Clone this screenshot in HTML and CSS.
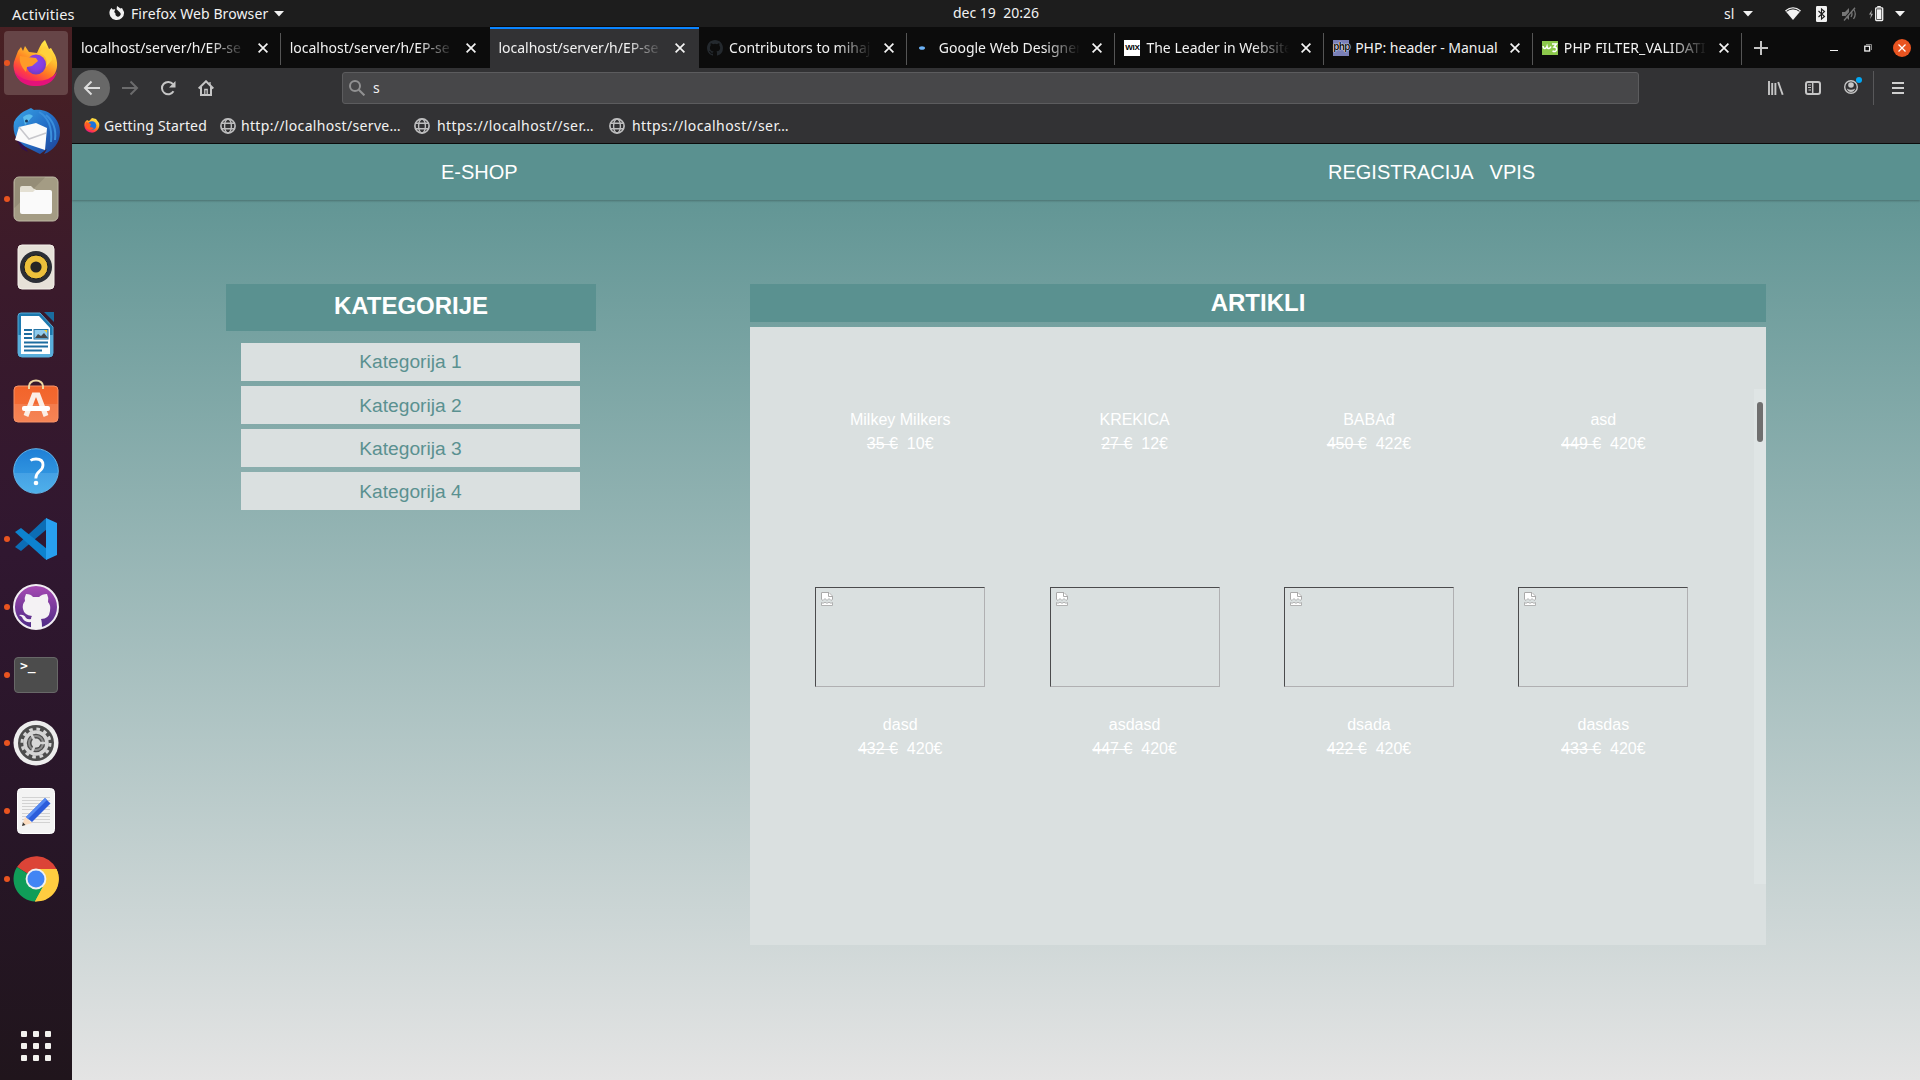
FILE: index.html
```html
<!DOCTYPE html>
<html lang="sl">
<head>
<meta charset="utf-8">
<title>E-SHOP</title>
<link rel="stylesheet" href="styles.css">
</head>
<body>
<svg class="defs" width="0" height="0">
  <defs>
    <linearGradient id="fox" x1=".85" y1="0" x2=".3" y2="1"><stop offset="0" stop-color="#fff44f"/><stop offset=".35" stop-color="#ffbd2f"/><stop offset=".6" stop-color="#ff7a22"/><stop offset=".8" stop-color="#ff3b47"/><stop offset="1" stop-color="#e31587"/></linearGradient>
    <radialGradient id="orb" cx=".5" cy=".4" r=".6"><stop offset="0" stop-color="#7a4ef0"/><stop offset=".6" stop-color="#8a3be0"/><stop offset="1" stop-color="#6a3ec0"/></radialGradient>
    <linearGradient id="bird" x1="0" y1="0" x2="1" y2="1"><stop offset="0" stop-color="#39a5e6"/><stop offset=".5" stop-color="#2470c8"/><stop offset="1" stop-color="#1d3f94"/></linearGradient>
    <linearGradient id="octo" x1="0" y1="0" x2="0" y2="1"><stop offset="0" stop-color="#a84bb4"/><stop offset="1" stop-color="#4b2a84"/></linearGradient>
    <linearGradient id="bag" x1="0" y1="0" x2="0" y2="1"><stop offset="0" stop-color="#f2642a"/><stop offset=".5" stop-color="#f36a33"/><stop offset=".51" stop-color="#f47c4c"/><stop offset="1" stop-color="#f58455"/></linearGradient>
    <linearGradient id="help" x1="0" y1="0" x2="0" y2="1"><stop offset="0" stop-color="#1f7fd6"/><stop offset=".54" stop-color="#2f93df"/><stop offset=".55" stop-color="#45a1e5"/><stop offset="1" stop-color="#4fb0ea"/></linearGradient>
    <symbol id="globe" viewBox="0 0 16 16"><g fill="none" stroke="#bdbdbe" stroke-width="1.4"><circle cx="8" cy="8" r="7.1" stroke-width="1.7"/><ellipse cx="8" cy="8" rx="3.4" ry="7"/><path d="M1 5.3h14M1 10.7h14"/></g></symbol>
    <symbol id="close" viewBox="0 0 10 10"><path d="M.6.6l8.8 8.8M9.4.6L.6 9.4" stroke="#f4f4f4" stroke-width="1.7"/></symbol>
    <symbol id="caret" viewBox="0 0 10 6"><path d="M0 0h10L5 5.4z" fill="#f2f2f2"/></symbol>
    <symbol id="cat" viewBox="0 0 16 16"><path d="M8 0C3.58 0 0 3.58 0 8c0 3.54 2.29 6.53 5.47 7.59.4.07.55-.17.55-.38 0-.19-.01-.82-.01-1.49-2.01.37-2.53-.49-2.69-.94-.09-.23-.48-.94-.82-1.13-.28-.15-.68-.52-.01-.53.63-.01 1.08.58 1.23.82.72 1.21 1.87.87 2.33.66.07-.52.28-.87.51-1.07-1.78-.2-3.64-.89-3.64-3.95 0-.87.31-1.59.82-2.15-.08-.2-.36-1.02.08-2.12 0 0 .67-.21 2.2.82a7.6 7.6 0 014 0c1.53-1.04 2.2-.82 2.2-.82.44 1.1.16 1.92.08 2.12.51.56.82 1.27.82 2.15 0 3.07-1.87 3.75-3.65 3.95.29.25.54.73.54 1.48 0 1.07-.01 1.93-.01 2.2 0 .21.15.46.55.38A8.01 8.01 0 0016 8c0-4.42-3.58-8-8-8z"/></symbol>
    <symbol id="broken" viewBox="0 0 12 14"><path d="M0 7V0h8l4 4v3l-2 1-2-1.500L6 8 4 6.500 2 8z" fill="#fff"/><path d="M.5 7V.5H8L11.500 4v3M7.500.5v4h4" fill="none" stroke="#aaa"/><path d="M0 7l2 1.500 2-2 2 2 2-2 2 2 2-1.500" fill="none" stroke="#aaa" stroke-width=".8"/><path d="M.5 10.500v3h11v-3l-1.500.8-2-1-2 1-2-1-2 1z" fill="#fff" stroke="#aaa" stroke-width=".9"/></symbol>
  </defs>
</svg>

<header class="topbar">
  <span class="activities">Activities</span>
  <svg class="app-glyph" width="16" height="16" viewBox="0 0 16 16"><path d="M1 4l1.500-2 1.200 1.500 2.600-.2L5.200 6l1.300 1.500A2.600 2.600 0 1 0 10.500 6L7.600 3.200 8 0l3.500 2.500L13 2l2 4a7.300 7.300 0 1 1-14-2z" fill="#f2f2f2"/></svg>
  <span class="app-name">Firefox Web Browser</span>
  <svg class="app-caret" width="10" height="6"><use href="#caret"/></svg>
  <span class="clock">dec 19&nbsp; 20:26</span>
  <div class="tray">
    <span class="lang">sl</span>
    <svg class="lang-caret" width="10" height="6"><use href="#caret"/></svg>
    <svg class="wifi" width="16" height="13" viewBox="0 0 16 13"><path d="M0 3.500Q8-3 16 3.500L8 13z" fill="#f2f2f2"/><path d="M1.500 4.300Q8-.5 14.500 4.300" fill="none" stroke="#1d1d1d" stroke-width="1"/></svg>
    <svg class="bt" width="11" height="16" viewBox="0 0 11 16"><rect width="11" height="16" rx="1.200" fill="#f2f2f2"/><path d="M2.500 5l6 5.500L5.500 13V3l3 2.500-6 5.500" fill="none" stroke="#1d1d1d" stroke-width="1.100"/></svg>
    <svg class="mute" width="15" height="14" viewBox="0 0 15 14"><path d="M0 5h3l4-4v12L3 9H0z" fill="#777"/><path d="M9 4q2 3 0 6M11.500 2q3.500 5 0 10" fill="none" stroke="#777" stroke-width="1.300"/><path d="M12 .5L1 13" stroke="#1d1d1d" stroke-width="1.200"/><path d="M13 .8L2 13.500" stroke="#777" stroke-width="1.300"/></svg>
    <svg class="battery" width="15" height="16" viewBox="0 0 15 16"><path d="M3 4L0 8.500h2L1.200 13 4 7.800H2.200z" fill="#aaa"/><path d="M8.500 1.200V.5h3v.7" stroke="#f2f2f2" fill="none"/><rect x="6.700" y="1.900" width="7" height="12.600" rx=".7" fill="none" stroke="#f2f2f2" stroke-width="1.300"/><rect x="8" y="3.300" width="4.400" height="9.800" fill="#f2f2f2"/></svg>
    <svg class="end-caret" width="10" height="6"><use href="#caret"/></svg>
  </div>
</header>

<div class="desktop">
  <nav class="dock">
    <div class="app running focused"><svg width="48" height="48" viewBox="0 0 48 48"><path d="M3 20L6 12l3-4 2 4 2-5 4 6 8 1c3-6 4-10 8-13l4 9 2-1 4 7c3 7 3 14-1 20A22 22 0 0 1 3 34c-2-5-2-10 0-14z" fill="url(#fox)"/><path d="M2.500 33q7 9 21.500 9t21-9Q41 47 24 47T2.500 33z" fill="#e4127a"/><circle cx="24" cy="25.500" r="10" fill="url(#orb)"/><path d="M8 17l7 1 9 1 2 3-6 5-5 1-1 5C9 28 7 22 8 17z" fill="#ff9a28"/><path d="M27 14q10 3 7 14l6-7q0-9-7-14z" fill="#ffd13c"/></svg></div>
    <div class="app"><svg width="50" height="50" viewBox="0 0 50 50"><path d="M3 16C8 6 16 4 20 2l3 2C38 2 49 13 49 26c0 11-7 19-16 22l3-5-7 5-14-7C6 37 1 27 3 16z" fill="url(#bird)"/><path d="M3 30l8 13 6 3-3-5z" fill="#321050"/><path d="M8 21l17-4 11 5-2 22L4 34z" fill="#fafafa"/><path d="M8 21l10 12 17-6" fill="none" stroke="#c7c7cc" stroke-width="1.500"/><path d="M12 11q6-5 10-1l-8 9z" fill="#5bbcec"/><circle cx="15.500" cy="15" r="1.500" fill="#17385f"/><path d="M28 6q14 8 12 30M35 9q11 9 9 25" stroke="#3b8fdc" stroke-width="2" fill="none"/></svg></div>
    <div class="app running"><svg width="46" height="46" viewBox="0 0 46 46"><rect x="1" y="1" width="44" height="44" rx="5" fill="#a49c84" stroke="#beb9a5"/><path d="M1.500 32L32 1.500H6q-4 0-4 4z" fill="#958d77"/><path d="M7 12q0-2 2-2h9l4 4h9v8H7z" fill="#e4e0d3"/><rect x="7" y="14" width="32" height="24" rx="2" fill="#fafafa"/><path d="M7 16h13l3-3H8z" fill="#e4e0d3"/></svg></div>
    <div class="app"><svg width="38" height="46" viewBox="0 0 38 46"><rect x="1" y="1" width="36" height="44" rx="4" fill="#e6e1d8" stroke="#f4f0ea"/><circle cx="19" cy="23" r="16" fill="#2b2e35"/><circle cx="19" cy="23" r="12" fill="#ecc03b" stroke="#171a20" stroke-width="1"/><circle cx="19" cy="23" r="5.600" fill="#252525"/></svg></div>
    <div class="app"><svg width="38" height="46" viewBox="0 0 38 46"><path d="M4 1h19l13 14v26q0 4-4 4H5q-4 0-4-4V4q0-3 3-3z" fill="#1d79ae" stroke="#56a9d4"/><path d="M1 23h35v18q0 4-4 4H5q-4 0-4-4z" fill="#59aedb"/><path d="M4 4h18l11 12v26H4z" fill="#fff"/><path d="M27 0h10v10z" fill="#1a6c9f"/><path d="M7 18h8M7 22h8M7 26h8M7 30.500h24M7 34.500h24M7 38.500h18" stroke="#1d6c9f" stroke-width="2"/><rect x="17" y="17.500" width="14" height="9.500" fill="#8fcbed" stroke="#2475a6"/><path d="M18 26l3-4 3 2 3-3 4 5z" fill="#45484a"/><path d="M27 18h3v3z" fill="#f5cc31"/></svg></div>
    <div class="app software"><svg width="46" height="44" viewBox="0 0 46 44"><rect x="1" y="7" width="44" height="36" rx="4" fill="url(#bag)" stroke="#f69268"/><path d="M16 10V7a7 5.500 0 0 1 14 0v3" fill="none" stroke="#efd8a2" stroke-width="2"/><path d="M13 37l8-21h4l8 21" fill="none" stroke="#fbeee6" stroke-width="5"/><rect x="9" y="27" width="28" height="5" rx="2" fill="#fff"/></svg></div>
    <div class="app"><svg width="46" height="46" viewBox="0 0 46 46"><circle cx="23" cy="23" r="22.300" fill="url(#help)" stroke="#61b5ea"/><path d="M17.500 12.500q2-1.500 5.500-1.500 7 0 7 6 0 3.500-3.700 6.300-3.500 2.700-3.500 7.200" fill="none" stroke="#fff" stroke-width="2.800"/><circle cx="23" cy="35" r="2.300" fill="#fff"/></svg></div>
    <div class="app running"><svg width="44" height="44" viewBox="0 0 44 44"><path d="M1 30l6 4L33 12V1L31 2z" fill="#0c6db5"/><path d="M1 15l6-4 26 21v11l-2-1z" fill="#0d83cf"/><path d="M32 1l11 5v32l-11 5z" fill="#28a0ef"/></svg></div>
    <div class="app running"><svg width="48" height="48" viewBox="0 0 48 48"><circle cx="24" cy="24" r="22" fill="url(#octo)" stroke="#f1edf3" stroke-width="2"/><path d="M14 11q5 0 7 3h6q3-3 8-3 2 4 1 8 3 3 2 9-1 8-9 8 1 2 1 10H19v-7q-7 1-9-5l-3-2q5-1 7 3 2 2 5 1 0-2 1-3-8-1-9-7-1-5 2-8-1-3 1-7z" fill="#f4f2f4"/></svg></div>
    <div class="app running"><div class="terminal-icon">&gt;_</div></div>
    <div class="app running"><svg width="46" height="46" viewBox="0 0 46 46"><circle cx="23" cy="23" r="22.500" fill="#ededed"/><circle cx="23" cy="23" r="18" fill="#4c4c4c"/><circle cx="23" cy="23" r="14" fill="none" stroke="#d4d4d4" stroke-width="3" stroke-dasharray="3.600 3.730"/><circle cx="23" cy="23" r="11" fill="#4c4c4c" stroke="#d4d4d4" stroke-width="3.500"/><circle cx="23" cy="23" r="7" fill="none" stroke="#8b8b8b" stroke-width="2"/><path d="M23 23l-5 11M23 23l-6-11M23 23h12" stroke="#d4d4d4" stroke-width="2.500"/><circle cx="23" cy="23" r="4.500" fill="#d8d8d8"/></svg></div>
    <div class="app running"><svg width="38" height="46" viewBox="0 0 38 46"><rect x=".5" y=".5" width="37" height="45" rx="4" fill="#f3f3f3" stroke="#fff"/><path d="M5 9.500h28M5 12.500h28M5 15.500h28M5 18.500h28M5 21.500h28M5 25.500h28M5 28.500h28M5 31.500h28M5 34.500h28" stroke="#d2d2d2"/><path d="M5 38l3-9 7 6z" fill="#fbdcc0"/><path d="M5 38l1-3.500 2.500 2.500z" fill="#333"/><path d="M9 29l19-19 5.500 5.500L15 34z" fill="#2c5ddb"/><path d="M9 29l19-19 2 2-19 19z" fill="#5489f2"/></svg></div>
    <div class="app running"><svg width="46" height="46" viewBox="0 0 46 46"><path d="M23 23L4 11A22.500 22.500 0 0 1 43.500 13z" fill="#dc4437"/><path d="M23 23l20.500-10A22.500 22.500 0 0 1 22 45.500z" fill="#ffcd40"/><path d="M23 23l9 4-10 18.500A22.500 22.500 0 0 1 4 11z" fill="#109d58"/><path d="M23 13h20.500q2 4 2 10-1 20-23.500 22.500L32 27z" fill="#ffcd40"/><circle cx="23" cy="23" r="10.400" fill="#f1f1f1"/><circle cx="23" cy="23" r="8.500" fill="#4285f4"/></svg></div>
    <div class="launcher"><i></i><i></i><i></i><i></i><i></i><i></i><i></i><i></i><i></i></div>
  </nav>

  <main class="browser">
    <div class="tabs">
      <div class="tab"><span class="label">localhost/server/h/EP-se</span><svg width="10" height="10"><use href="#close"/></svg></div>
      <div class="tab no-line"><span class="label">localhost/server/h/EP-se</span><svg width="10" height="10"><use href="#close"/></svg></div>
      <div class="tab active"><span class="label">localhost/server/h/EP-se</span><svg width="10" height="10"><use href="#close"/></svg></div>
      <div class="tab"><svg class="fav" width="16" height="16" fill="#24292e"><use href="#cat"/></svg><span class="label">Contributors to mihaj</span><svg width="10" height="10"><use href="#close"/></svg></div>
      <div class="tab loading"><svg class="fav" width="16" height="16" viewBox="0 0 16 16"><ellipse cx="6" cy="8" rx="3" ry="1.800" fill="#6cb2f7"/></svg><span class="label">Google Web Designer</span><svg width="10" height="10"><use href="#close"/></svg></div>
      <div class="tab"><span class="fav wix">WIX</span><span class="label">The Leader in Website</span><svg width="10" height="10"><use href="#close"/></svg></div>
      <div class="tab"><span class="fav php">php</span><span class="label full">PHP: header - Manual</span><svg width="10" height="10"><use href="#close"/></svg></div>
      <div class="tab"><svg class="fav" width="16" height="16" viewBox="0 0 16 16"><rect y="1" width="16" height="14" fill="#8cc84b"/><path d="M1 6q.5 3 2 2.500T5 6.500q.5 2.500 2 2T9 6.500M10 4h4.500L12 7q3 0 2.500 3-1 2.500-4 1" fill="none" stroke="#fff" stroke-width="1.500"/></svg><span class="label filter">PHP FILTER_VALIDATI</span><svg width="10" height="10"><use href="#close"/></svg></div>
      <svg class="new-tab" width="14" height="14" viewBox="0 0 14 14"><path d="M7 0v14M0 7h14" stroke="#c4c4c4" stroke-width="2"/></svg>
      <svg class="minimize" width="8" height="8" viewBox="0 0 8 8"><path d="M0 6.500h8" stroke="#f2f2f2"/></svg>
      <svg class="restore" width="8" height="8" viewBox="0 0 8 8"><rect x=".8" y="2.200" width="4.800" height="4.800" fill="none" stroke="#f2f2f2" stroke-width="1.300"/><path d="M2 .5h5.500V6" fill="none" stroke="#888"/></svg>
      <svg class="quit" width="18" height="18" viewBox="0 0 18 18"><circle cx="9" cy="9" r="9" fill="#e95420"/><path d="M5.500 5.500l7 7M12.500 5.500l-7 7" stroke="#fff" stroke-width="1.300"/></svg>
    </div>

    <div class="toolbar">
      <div class="back"><svg width="18" height="16" viewBox="0 0 18 16"><path d="M17 8H2M8.500 1.500L2 8l6.500 6.500" fill="none" stroke="#ddd" stroke-width="2"/></svg></div>
      <svg class="forward" width="18" height="16" viewBox="0 0 18 16"><path d="M1 8h15M9.500 1.500L16 8l-6.500 6.500" fill="none" stroke="#6b6b6c" stroke-width="2"/></svg>
      <svg class="reload" width="16" height="16" viewBox="0 0 16 16"><path d="M13.500 11.300A6.200 6.200 0 1 1 13 4.200" fill="none" stroke="#c6c6c6" stroke-width="2"/><path d="M15.500 1v6.500H9z" fill="#c6c6c6"/></svg>
      <svg class="home" width="16" height="16" viewBox="0 0 16 16"><path d="M.7 8.500L8 1.300l7.300 7.200M3 7v8h10V7" fill="none" stroke="#c6c6c6" stroke-width="2"/><path d="M6.800 15V9.500h2.400V15M12 2v3" stroke="#c6c6c6" stroke-width="1.300" fill="none"/></svg>
      <div class="urlbar"><svg width="16" height="16" viewBox="0 0 16 16"><circle cx="6" cy="6" r="5" fill="none" stroke="#919192" stroke-width="2"/><path d="M9.800 9.800l5.600 5.600" stroke="#919192" stroke-width="2"/></svg><span>s</span></div>
      <svg class="library" width="16" height="14" viewBox="0 0 16 14"><path d="M1 0v14M4.200 2v12M7.400 2v12M10.200 1l4.500 12.700" stroke="#c6c6c6" stroke-width="1.900"/></svg>
      <svg class="reader" width="16" height="14" viewBox="0 0 16 14"><rect x="1" y="1" width="14" height="12" rx="2" fill="none" stroke="#c6c6c6" stroke-width="2"/><path d="M7.700 1v12" stroke="#c6c6c6" stroke-width="1.500"/><path d="M3 4h3M3 6.500h3M3.500 9H6" stroke="#c6c6c6"/></svg>
      <svg class="account" width="19" height="18" viewBox="0 0 19 18"><circle cx="7" cy="11" r="6.300" fill="none" stroke="#c6c6c6" stroke-width="1.400"/><circle cx="7" cy="9" r="2.800" fill="#c6c6c6"/><path d="M2.800 12.500Q7 15 11.200 12.500 10 16 7 16t-4.200-3.500z" fill="#c6c6c6"/><circle cx="15" cy="4" r="3" fill="#00a8f5"/></svg>
      <span class="divider"></span>
      <svg class="menu" width="12" height="12" viewBox="0 0 12 12"><path d="M0 1h12M0 6h12M0 11h12" stroke="#cfcfcf" stroke-width="1.800"/></svg>
    </div>

    <div class="bookmarks">
      <div class="bookmark first"><svg width="16" height="16" viewBox="0 0 16 16"><path d="M1 4l2-2 2 1 3-3 4 1 3 4a7.500 7.500 0 1 1-14-1z" fill="url(#fox)"/><circle cx="8" cy="7.500" r="4.300" fill="#1b72dc"/><path d="M2 4l5 2-1 3 4 1q-4 4-8 0z" fill="#ff5a24"/></svg><span>Getting Started</span></div>
      <div class="bookmark second"><svg width="16" height="16"><use href="#globe"/></svg><span>http://localhost/serve…</span></div>
      <div class="bookmark third"><svg width="16" height="16"><use href="#globe"/></svg><span>https://localhost//ser…</span></div>
      <div class="bookmark third"><svg width="16" height="16"><use href="#globe"/></svg><span>https://localhost//ser…</span></div>
    </div>

    <div class="page">
      <header class="shop-header">
        <span class="brand">E-SHOP</span>
        <nav class="links"><span>REGISTRACIJA</span><span>VPIS</span></nav>
      </header>
      <div class="shop">
        <aside class="categories">
          <h2>KATEGORIJE</h2>
          <ul><li>Kategorija 1</li><li>Kategorija 2</li><li>Kategorija 3</li><li>Kategorija 4</li></ul>
        </aside>
        <section class="articles">
          <h2>ARTIKLI</h2>
          <div class="panel">
            <div class="scroller">
              <div class="grid">
                <article><div class="details"><p>Milkey Milkers</p><p><s>35 €</s>&nbsp; 10€</p></div></article>
                <article><div class="details"><p>KREKICA</p><p><s>27 €</s>&nbsp; 12€</p></div></article>
                <article><div class="details"><p>BABAđ</p><p><s>450 €</s>&nbsp; 422€</p></div></article>
                <article><div class="details"><p>asd</p><p><s>449 €</s>&nbsp; 420€</p></div></article>
                <article><div class="picture"><svg width="12" height="14"><use href="#broken"/></svg></div><div class="details"><p>dasd</p><p><s>432 €</s>&nbsp; 420€</p></div></article>
                <article><div class="picture"><svg width="12" height="14"><use href="#broken"/></svg></div><div class="details"><p>asdasd</p><p><s>447 €</s>&nbsp; 420€</p></div></article>
                <article><div class="picture"><svg width="12" height="14"><use href="#broken"/></svg></div><div class="details"><p>dsada</p><p><s>422 €</s>&nbsp; 420€</p></div></article>
                <article><div class="picture"><svg width="12" height="14"><use href="#broken"/></svg></div><div class="details"><p>dasdas</p><p><s>433 €</s>&nbsp; 420€</p></div></article>
              </div>
              <div class="track"><div class="thumb"></div></div>
            </div>
          </div>
        </section>
      </div>
    </div>
  </main>
</div>
</body>
</html>
```
FILE: styles.css
```css
* { box-sizing: border-box; }
body {
  margin: 0;
  width: 1920px;
  height: 1080px;
  overflow: hidden;
  font: 14px/20px "Noto Sans", sans-serif;
  color: #f2f2f2;
}
svg { display: block; flex: none; }
.defs { position: absolute; }
h2, p, ul { margin: 0; padding: 0; }

/* GNOME top bar */
.topbar {
  display: flex;
  align-items: center;
  height: 27px;
  padding-left: 12px;
  background: #1d1d1d;
  white-space: nowrap;
}
.activities { width: 97px; font-size: 14.6px; letter-spacing: .2px; }
.app-glyph { margin-right: 6px; }
.app-name { width: 143px; letter-spacing: .1px; }
.clock { margin-left: 669px; width: 771px; padding-bottom: 1px; letter-spacing: 0; }
.tray { display: flex; align-items: center; }
.lang { width: 19px; }
.wifi { margin-left: 32px; }
.bt { margin-left: 15px; }
.mute { margin-left: 15px; }
.battery { margin-left: 12px; }
.end-caret { margin-left: 11px; }

.desktop { display: flex; height: 1053px; }

/* Dock */
.dock {
  display: flex;
  flex-direction: column;
  align-items: center;
  gap: 4px;
  width: 72px;
  padding-top: 4px;
  background: linear-gradient(#492023, #3a1a2b 25%, #301730 50%, #281628 75%, #20151c);
}
.app {
  position: relative;
  display: flex;
  align-items: center;
  justify-content: center;
  width: 64px;
  height: 64px;
  flex: none;
  border-radius: 4px;
}
.focused { background: #664547; }
.running::before {
  content: "";
  position: absolute;
  left: 0;
  top: 29px;
  width: 6px;
  height: 6px;
  border-radius: 50%;
  background: #e95420;
}
.software { padding-bottom: 5px; }
.terminal-icon {
  width: 44px;
  height: 36px;
  padding: 0 5px;
  border: 1px solid #686868;
  border-radius: 4px;
  background: #4c4c4c;
  font: bold 13px/15px "DejaVu Sans Mono", monospace;
  color: #fff;
}
.launcher {
  display: grid;
  grid-template-columns: repeat(3, 6px);
  gap: 6px;
  margin-top: auto;
  margin-bottom: 19px;
}
.launcher i { width: 6px; height: 6px; border-radius: 1px; background: #f2f1ee; }

/* Browser chrome */
.browser { display: flex; flex-direction: column; width: 1848px; }
.tabs {
  display: flex;
  align-items: center;
  height: 41px;
  background: #0c0c0c;
}
.tab {
  position: relative;
  display: flex;
  align-items: center;
  width: 208.7px;
  height: 40px;
  padding: 0 13px 0 9px;
  white-space: nowrap;
}
.tab::after {
  content: "";
  position: absolute;
  right: 0;
  top: 5px;
  width: 1px;
  height: 32px;
  background: #555;
}
.no-line::after, .active::after { display: none; }
.active {
  height: 41px;
  margin-right: -1px;
  margin-left: 1px;
  padding: 0 14px 2px 8px;
  border-top: 2px solid #0a84ff;
  background: #323234;
  box-shadow: 0 -1px #0c0c0c;
}
.label {
  flex: 1;
  min-width: 0;
  margin-right: 12px;
  overflow: hidden;
  -webkit-mask-image: linear-gradient(to left, transparent 0, #000 36px);
  mask-image: linear-gradient(to left, transparent 0, #000 36px);
}
.full { -webkit-mask-image: none; mask-image: none; }
.filter { letter-spacing: .1px; }
.fav { flex: none; width: 16px; height: 16px; margin-right: 6px; }
.loading .fav { margin-right: 7px; }
.wix { background: #fff; color: #000; font: bold 8px/16px "Liberation Sans", sans-serif; text-align: center; letter-spacing: -.3px; }
.php { background: #7a80b8; color: #111; font: bold 10px/14px "Liberation Sans", sans-serif; text-align: center; text-shadow: 0 0 1px #fff, 0 0 1px #fff, 0 0 1px #fff; letter-spacing: -.6px; }
.new-tab { margin-left: 12px; }
.minimize { margin-left: 62px; }
.restore { margin-left: 26px; }
.quit { margin-left: 21px; }

.toolbar {
  display: flex;
  align-items: center;
  height: 40px;
  padding-left: 2px;
  background: #323234;
}
.back {
  display: flex;
  align-items: center;
  justify-content: center;
  width: 36px;
  height: 36px;
  border-radius: 50%;
  background: #686868;
}
.forward { margin-left: 11px; }
.reload { margin-left: 21px; }
.home { margin-left: 22px; }
.urlbar {
  display: flex;
  align-items: center;
  gap: 8px;
  width: 1297px;
  height: 32px;
  margin-left: 128px;
  padding-left: 6px;
  border: 1px solid #5c5c5e;
  border-radius: 3px;
  background: #474749;
}
.library { margin-left: 129px; }
.reader { margin-left: 21px; }
.account { margin-left: 23px; margin-bottom: 6px; }
.divider { width: 1px; height: 34px; margin-left: 10px; background: #58585a; }
.menu { margin-left: 18px; }

.bookmarks {
  display: flex;
  align-items: center;
  height: 36px;
  padding-left: 12px;
  background: #323234;
  border-bottom: 1px solid #0c0c0c;
  white-space: nowrap;
}
.bookmark { display: flex; align-items: center; gap: 4px; }
.first { width: 136px; letter-spacing: .15px; }
.second { width: 194px; gap: 5px; letter-spacing: .33px; }
.third { width: 195px; gap: 7px; letter-spacing: .43px; }

/* Shop page */
.page {
  flex: 1;
  background: linear-gradient(#5a9190, #e4e4e4);
  font-family: "Liberation Sans", Arial, sans-serif;
  color: #fff;
}
.shop-header {
  display: flex;
  height: 56px;
  padding-left: 369px;
  background: #5a9190;
  box-shadow: 0 1px 2px rgba(0, 0, 0, .25);
  font-size: 20px;
  line-height: 56px;
}
.brand { width: 887px; }
.links { display: flex; gap: 16px; }
.shop { display: flex; align-items: flex-start; padding: 84px 154px 0; }
h2 { background: #5a9190; font-size: 24px; text-align: center; }
.categories { width: 370px; }
.categories h2 { height: 47px; line-height: 43px; }
ul {
  display: flex;
  flex-direction: column;
  gap: 5px;
  padding: 12px 16px 0 15px;
  list-style: none;
}
li {
  height: 38px;
  background: #dae0e0;
  color: #5a9190;
  font-size: 19.2px;
  line-height: 39px;
  text-align: center;
}
li:first-child { line-height: 37px; }
.articles { width: 1016px; margin-left: 154px; }
.articles h2 { height: 38px; line-height: 38px; }
.panel { height: 618px; margin-top: 5px; padding-top: 62px; background: #dae0e0; }
.scroller { display: flex; height: 495px; }
.grid {
  display: grid;
  grid-template-columns: repeat(4, 234.4px);
  grid-template-rows: 198px 297px;
  width: 1004px;
  padding-left: 33px;
}
article { display: flex; flex-direction: column; align-items: center; }
.picture {
  width: 170px;
  height: 100px;
  padding: 4px 5px;
  border: 1px solid;
  border-color: #4b4b4d #b0b0b2 #b0b0b2 #4b4b4d;
}
.details { padding-top: 19px; font-size: 16px; line-height: 24px; text-align: center; }
.picture + .details { padding-top: 26px; }
.track { width: 12px; padding: 13px 3px; background: #dfe5e5; }
.thumb { height: 40px; border-radius: 3px; background: #6f6f6f; }
```
